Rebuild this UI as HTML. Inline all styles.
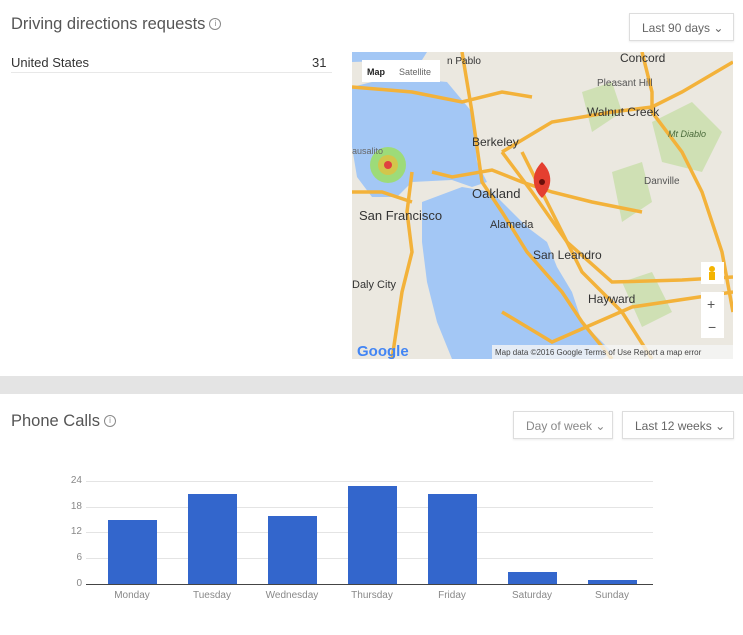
<!DOCTYPE html>
<html><head><meta charset="utf-8"><style>
body{margin:0;width:743px;height:635px;background:#fff;font-family:"Liberation Sans",sans-serif;position:relative;overflow:hidden}
.a{position:absolute}
.t{font-size:16.5px;color:#555;font-weight:300}
.btn{position:absolute;border:1px solid #ddd;box-shadow:0 1px 2px rgba(0,0,0,.08);font-size:12px;color:#666;height:28px;line-height:28px;padding:0 0 0 12px;box-sizing:border-box;background:#fff}
.ic{display:inline-block;width:10px;height:10px;border:1px solid #888;border-radius:50%;font-size:8px;line-height:10px;text-align:center;color:#888;vertical-align:3px;margin-left:4px}
.lbl{position:absolute;font-size:10px;color:#888;width:60px;text-align:center}
.yl{position:absolute;font-size:10px;color:#888;width:20px;text-align:right}
.g{position:absolute;left:86px;width:567px;height:1px;background:#e4e4e4}
.bar{position:absolute;background:#3366cc;width:49px}
</style></head><body>
<div class="a t" style="left:11px;top:15px">Driving directions requests<span class="ic">i</span></div>
<div class="btn" style="left:629px;top:13px;width:105px">Last 90 days &#8964;</div>
<div class="a" style="left:11px;top:55px;font-size:13px;color:#333">United States</div>
<div class="a" style="left:312px;top:55px;font-size:13px;color:#333">31</div>
<div class="a" style="left:11px;top:72px;width:321px;height:1px;background:#e8e8e8"></div>
<svg class="a" style="left:352px;top:52px" width="381" height="307" viewBox="0 0 381 307">
<rect width="381" height="307" fill="#ebe8e0"/>
<path d="M230 40 L260 30 L270 60 L240 80 Z M300 70 L340 50 L370 80 L350 120 L310 110 Z M260 120 L290 110 L300 150 L270 170 Z M270 230 L300 220 L320 260 L290 275 Z" fill="#cfe0b4"/>
<path d="M0 0 L75 0 L70 8 L0 10 Z M0 35 L40 25 L95 30 L120 60 L125 110 L135 130 L120 135 L100 128 L60 130 L45 145 L20 145 L5 125 L0 95 Z" fill="#a3c7f5"/>
<path d="M70 150 L110 135 L140 140 L150 150 L175 175 L195 190 L205 215 L220 240 L230 270 L260 300 L250 307 L100 307 L85 270 L75 230 L70 190 Z" fill="#a3c7f5"/>
<g stroke="#f3b23a" stroke-width="3.5" fill="none">
<path d="M0 35 L60 40 L110 50 L150 40 L180 45"/>
<path d="M110 0 L120 60 L130 130 L150 160 L175 200 L210 240 L230 270 L260 307"/>
<path d="M80 120 L100 125 L140 118 L170 130 L200 140 L240 150 L290 160"/>
<path d="M150 100 L200 70 L260 60 L300 55 L330 40 L381 10"/>
<path d="M150 100 L180 140 L215 190 L260 230 L330 228 L381 225"/>
<path d="M290 0 L300 40 L300 60 L330 100 L350 140 L370 200 L381 260"/>
<path d="M170 100 L200 160 L230 220 L270 260 L300 307"/>
<path d="M60 120 L55 160 L60 200 L50 240 L40 307"/>
<path d="M0 140 L30 140 L60 150"/>
<path d="M150 260 L200 290 L280 255 L381 240"/>
</g>
<circle cx="36" cy="113" r="18" fill="#9be05a" opacity=".8"/>
<circle cx="36" cy="113" r="10" fill="#e0c040" opacity=".8"/>
<circle cx="36" cy="113" r="4" fill="#e04040"/>
<path d="M190 146 C180 136 178 122 190 110 C202 122 200 136 190 146 Z" fill="#e43f30"/>
<circle cx="190" cy="130" r="3" fill="#6a0f0a"/>
<g font-family="Liberation Sans,sans-serif" fill="#333">
<text x="268" y="10" font-size="12">Concord</text>
<text x="245" y="34" font-size="10" fill="#555">Pleasant Hill</text>
<text x="235" y="64" font-size="12">Walnut Creek</text>
<text x="316" y="85" font-size="9" font-style="italic" fill="#4a6a3a">Mt Diablo</text>
<text x="120" y="94" font-size="12">Berkeley</text>
<text x="292" y="132" font-size="10" fill="#555">Danville</text>
<text x="120" y="146" font-size="13">Oakland</text>
<text x="7" y="168" font-size="13">San Francisco</text>
<text x="138" y="176" font-size="11">Alameda</text>
<text x="181" y="207" font-size="12">San Leandro</text>
<text x="0" y="236" font-size="11">Daly City</text>
<text x="236" y="251" font-size="12">Hayward</text>
<text x="0" y="102" font-size="9" fill="#666">ausalito</text>
<text x="95" y="12" font-size="10">n Pablo</text>
<text x="5" y="304" font-size="15" fill="#4285f4" font-weight="bold">Google</text>
</g>
<rect x="140" y="293" width="241" height="14" fill="#f5f5f5" opacity=".8"/>
<text x="143" y="303" font-size="8" fill="#444" font-family="Liberation Sans,sans-serif">Map data ©2016 Google   Terms of Use  Report a map error</text>
<rect x="10" y="8" width="78" height="22" fill="#fff"/>
<text x="15" y="23" font-size="9" font-weight="bold" fill="#222" font-family="Liberation Sans,sans-serif">Map</text>
<text x="47" y="23" font-size="9" fill="#666" font-family="Liberation Sans,sans-serif">Satellite</text>
<rect x="349" y="210" width="23" height="22" fill="#fff"/>
<circle cx="360" cy="217" r="3" fill="#f4b400"/><rect x="357" y="220" width="6" height="8" fill="#f4b400"/>
<rect x="349" y="240" width="23" height="46" fill="#fff"/>
<text x="355" y="257" font-size="14" fill="#555" font-family="Liberation Sans,sans-serif">+</text>
<text x="356" y="280" font-size="14" fill="#555" font-family="Liberation Sans,sans-serif">−</text>
</svg>
<div class="a" style="left:0;top:376px;width:743px;height:18px;background:#e4e4e4"></div>
<div class="a t" style="left:11px;top:412px">Phone Calls<span class="ic">i</span></div>
<div class="btn" style="left:513px;top:411px;width:100px;color:#888">Day of week &#8964;</div>
<div class="btn" style="left:622px;top:411px;width:112px">Last 12 weeks &#8964;</div>
<div class="g" style="top:481px"></div><div class="g" style="top:507px"></div><div class="g" style="top:532px"></div><div class="g" style="top:558px"></div>
<div class="g" style="top:584px;background:#444"></div>
<div class="yl" style="left:62px;top:475px">24</div><div class="yl" style="left:62px;top:501px">18</div><div class="yl" style="left:62px;top:526px">12</div><div class="yl" style="left:62px;top:552px">6</div><div class="yl" style="left:62px;top:578px">0</div>
<div class="bar" style="left:108px;top:520px;height:64px"></div>
<div class="bar" style="left:188px;top:494px;height:90px"></div>
<div class="bar" style="left:268px;top:516px;height:68px"></div>
<div class="bar" style="left:348px;top:486px;height:98px"></div>
<div class="bar" style="left:428px;top:494px;height:90px"></div>
<div class="bar" style="left:508px;top:572px;height:12px"></div>
<div class="bar" style="left:588px;top:580px;height:4px"></div>
<div class="lbl" style="left:102px;top:590px">Monday</div>
<div class="lbl" style="left:182px;top:590px">Tuesday</div>
<div class="lbl" style="left:262px;top:590px">Wednesday</div>
<div class="lbl" style="left:342px;top:590px">Thursday</div>
<div class="lbl" style="left:422px;top:590px">Friday</div>
<div class="lbl" style="left:502px;top:590px">Saturday</div>
<div class="lbl" style="left:582px;top:590px">Sunday</div>
</body></html>
